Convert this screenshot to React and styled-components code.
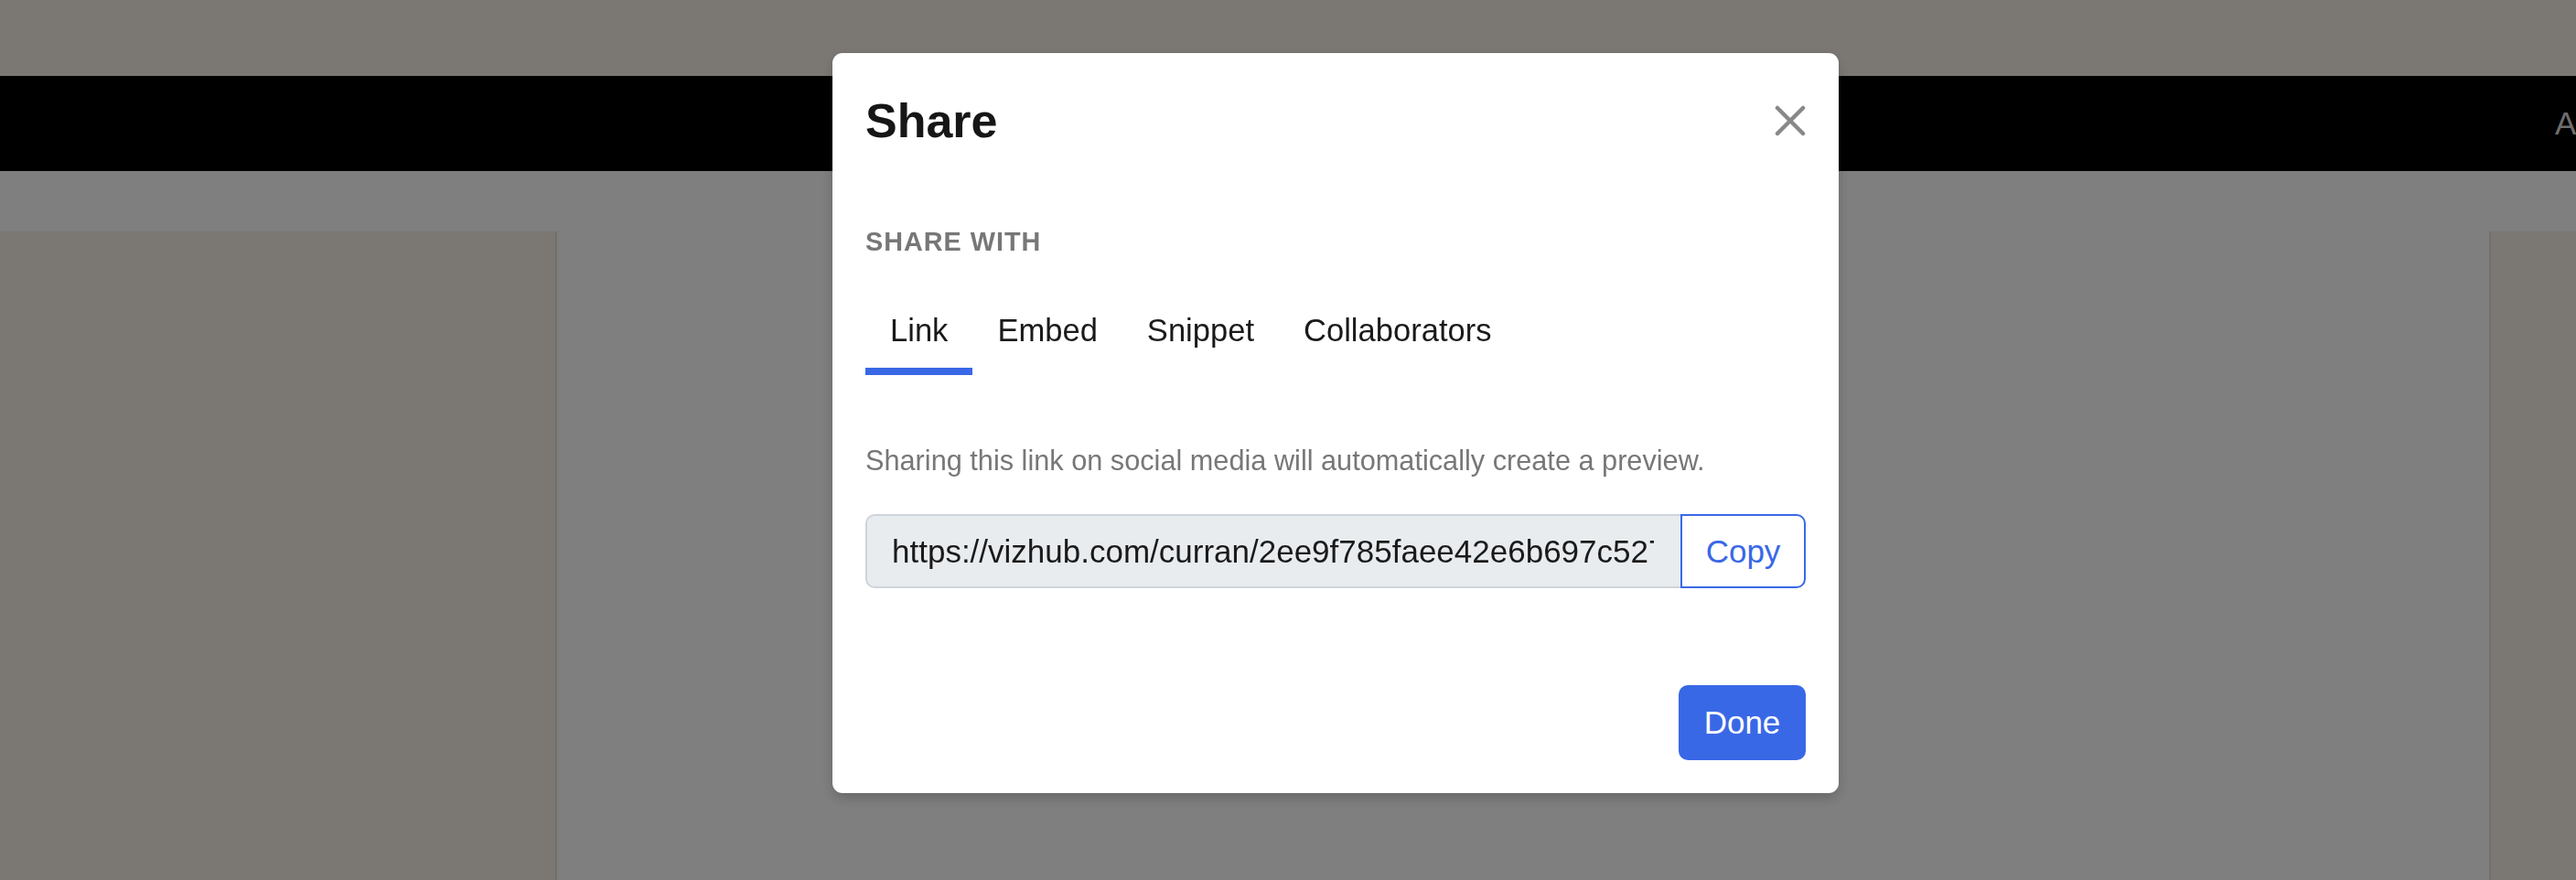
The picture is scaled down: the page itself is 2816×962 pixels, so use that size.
import React, { useState } from "react";
import styled, { createGlobalStyle } from "styled-components";

const tabs = ["Link", "Embed", "Snippet", "Collaborators"];
const shareUrl =
  "https://vizhub.com/curran/2ee9f785faee42e6b697c5272c55d6bb";

const App = () => {
  const [activeTab, setActiveTab] = useState("Link");
  return (
    <>
      <GlobalStyle />
      <Page>
        <TopStrip />
        <NavBar>
          <NavRight>
            <NavLink>About</NavLink>
          </NavRight>
        </NavBar>
        <Content>
          <SidePanel width="609px" edge="right" />
          <SidePanel width="95px" edge="left" />
        </Content>
      </Page>
      <Backdrop>
        <Modal>
          <Header>
            <Title>Share</Title>
            <CloseButton aria-label="Close">
              <svg width="34" height="34" viewBox="0 0 34 34">
                <path
                  d="M3 3 L31 31 M31 3 L3 31"
                  stroke="#888"
                  strokeWidth="4.5"
                  strokeLinecap="round"
                  fill="none"
                />
              </svg>
            </CloseButton>
          </Header>
          <Body>
            <Label>SHARE WITH</Label>
            <TabList>
              {tabs.map(t => (
                <Tab
                  key={t}
                  active={t === activeTab}
                  onClick={() => setActiveTab(t)}
                >
                  {t}
                </Tab>
              ))}
            </TabList>
            <Description>
              Sharing this link on social media will automatically create a
              preview.
            </Description>
            <InputGroup>
              <UrlInput readOnly value={shareUrl} />
              <CopyButton>Copy</CopyButton>
            </InputGroup>
          </Body>
          <Footer>
            <DoneButton>Done</DoneButton>
          </Footer>
        </Modal>
      </Backdrop>
    </>
  );
};

const GlobalStyle = createGlobalStyle`
  html, body {
    margin: 0;
    height: 100%;
    overflow: hidden;
  }
  body {
    font-family: "Liberation Sans", Arial, sans-serif;
  }
`;

const Page = styled.div`
  height: 100vh;
  background: #fff;
  display: flex;
  flex-direction: column;
  overflow: hidden;
`;
const TopStrip = styled.div`
  height: 83px;
  flex: none;
  background: #f6f0e6;
`;
const NavBar = styled.nav`
  height: 104px;
  flex: none;
  background: #000;
  display: flex;
  justify-content: flex-end;
  align-items: center;
  overflow: hidden;
`;
const NavRight = styled.div`
  width: 100px;
  margin-right: -77px;
  flex: none;
`;
const NavLink = styled.span`
  font-size: 35px;
  color: #dcdcdc;
  white-space: nowrap;
`;
const Content = styled.div`
  flex: 1;
  display: flex;
  justify-content: space-between;
  padding-top: 66px;
`;
const SidePanel = styled.div`
  width: ${props => props.width};
  background: #f6f0e6;
  box-shadow: ${props =>
    props.edge === "right"
      ? "inset -2px 0 0 rgba(0, 0, 0, 0.07)"
      : "inset 2px 0 0 rgba(0, 0, 0, 0.07)"};
`;

const Backdrop = styled.div`
  position: fixed;
  inset: 0;
  background: rgba(0, 0, 0, 0.5);
  display: flex;
  justify-content: center;
  align-items: flex-start;
  padding: 58px 0 0 104px;
`;
const Modal = styled.div`
  width: 1100px;
  background: #fff;
  border-radius: 11px;
  box-shadow: 0 6px 14px rgba(0, 0, 0, 0.18);
  display: flex;
  flex-direction: column;
`;
const Header = styled.div`
  display: flex;
  justify-content: space-between;
  align-items: center;
  padding: 35px 36px 36px;
`;
const Title = styled.h2`
  margin: 0;
  font-size: 52px;
  line-height: 1.5;
  font-weight: 700;
  color: #161616;
`;
const CloseButton = styled.button`
  width: 34px;
  height: 34px;
  padding: 0;
  border: none;
  background: none;
  display: flex;
  cursor: pointer;
`;
const Body = styled.div`
  padding: 36px 36px 36px;
  display: flex;
  flex-direction: column;
`;
const Label = styled.div`
  font-size: 28.8px;
  line-height: 1.5;
  font-weight: 700;
  letter-spacing: 1px;
  color: #777;
  margin-bottom: 35px;
`;
const TabList = styled.div`
  display: flex;
`;
const Tab = styled.button`
  font-family: "Liberation Sans", Arial, sans-serif;
  font-size: 34.56px;
  line-height: 1.5;
  color: #1a1a1a;
  background: none;
  border: none;
  padding: 14.4px 27px 14.4px;
  border-bottom: 8px solid ${props => (props.active ? "#3968e6" : "transparent")};
  cursor: pointer;
`;
const Description = styled.p`
  margin: 72px 0 37px;
  font-size: 30.7px;
  line-height: 43.2px;
  color: #777;
`;
const InputGroup = styled.div`
  display: flex;
  height: 81px;
`;
const UrlInput = styled.input`
  flex: 1;
  min-width: 0;
  box-sizing: border-box;
  height: 100%;
  font-family: "Liberation Sans", Arial, sans-serif;
  font-size: 35px;
  color: #1a1a1a;
  background: #e9ecef;
  border: 2px solid #ced4da;
  border-right: none;
  border-radius: 10px 0 0 10px;
  padding: 0 29px 0 27px;
  outline: none;
`;
const CopyButton = styled.button`
  box-sizing: border-box;
  width: 137px;
  height: 100%;
  font-family: "Liberation Sans", Arial, sans-serif;
  font-size: 35px;
  color: #3968e6;
  background: #fff;
  border: 2px solid #3968e6;
  border-radius: 0 10px 10px 0;
  cursor: pointer;
`;
const Footer = styled.div`
  display: flex;
  justify-content: flex-end;
  padding: 70px 36px 36px;
`;
const DoneButton = styled.button`
  box-sizing: border-box;
  width: 139px;
  height: 82px;
  font-family: "Liberation Sans", Arial, sans-serif;
  font-size: 35px;
  color: #fff;
  background: #3968e6;
  border: none;
  border-radius: 10px;
  cursor: pointer;
`;

export default App;
